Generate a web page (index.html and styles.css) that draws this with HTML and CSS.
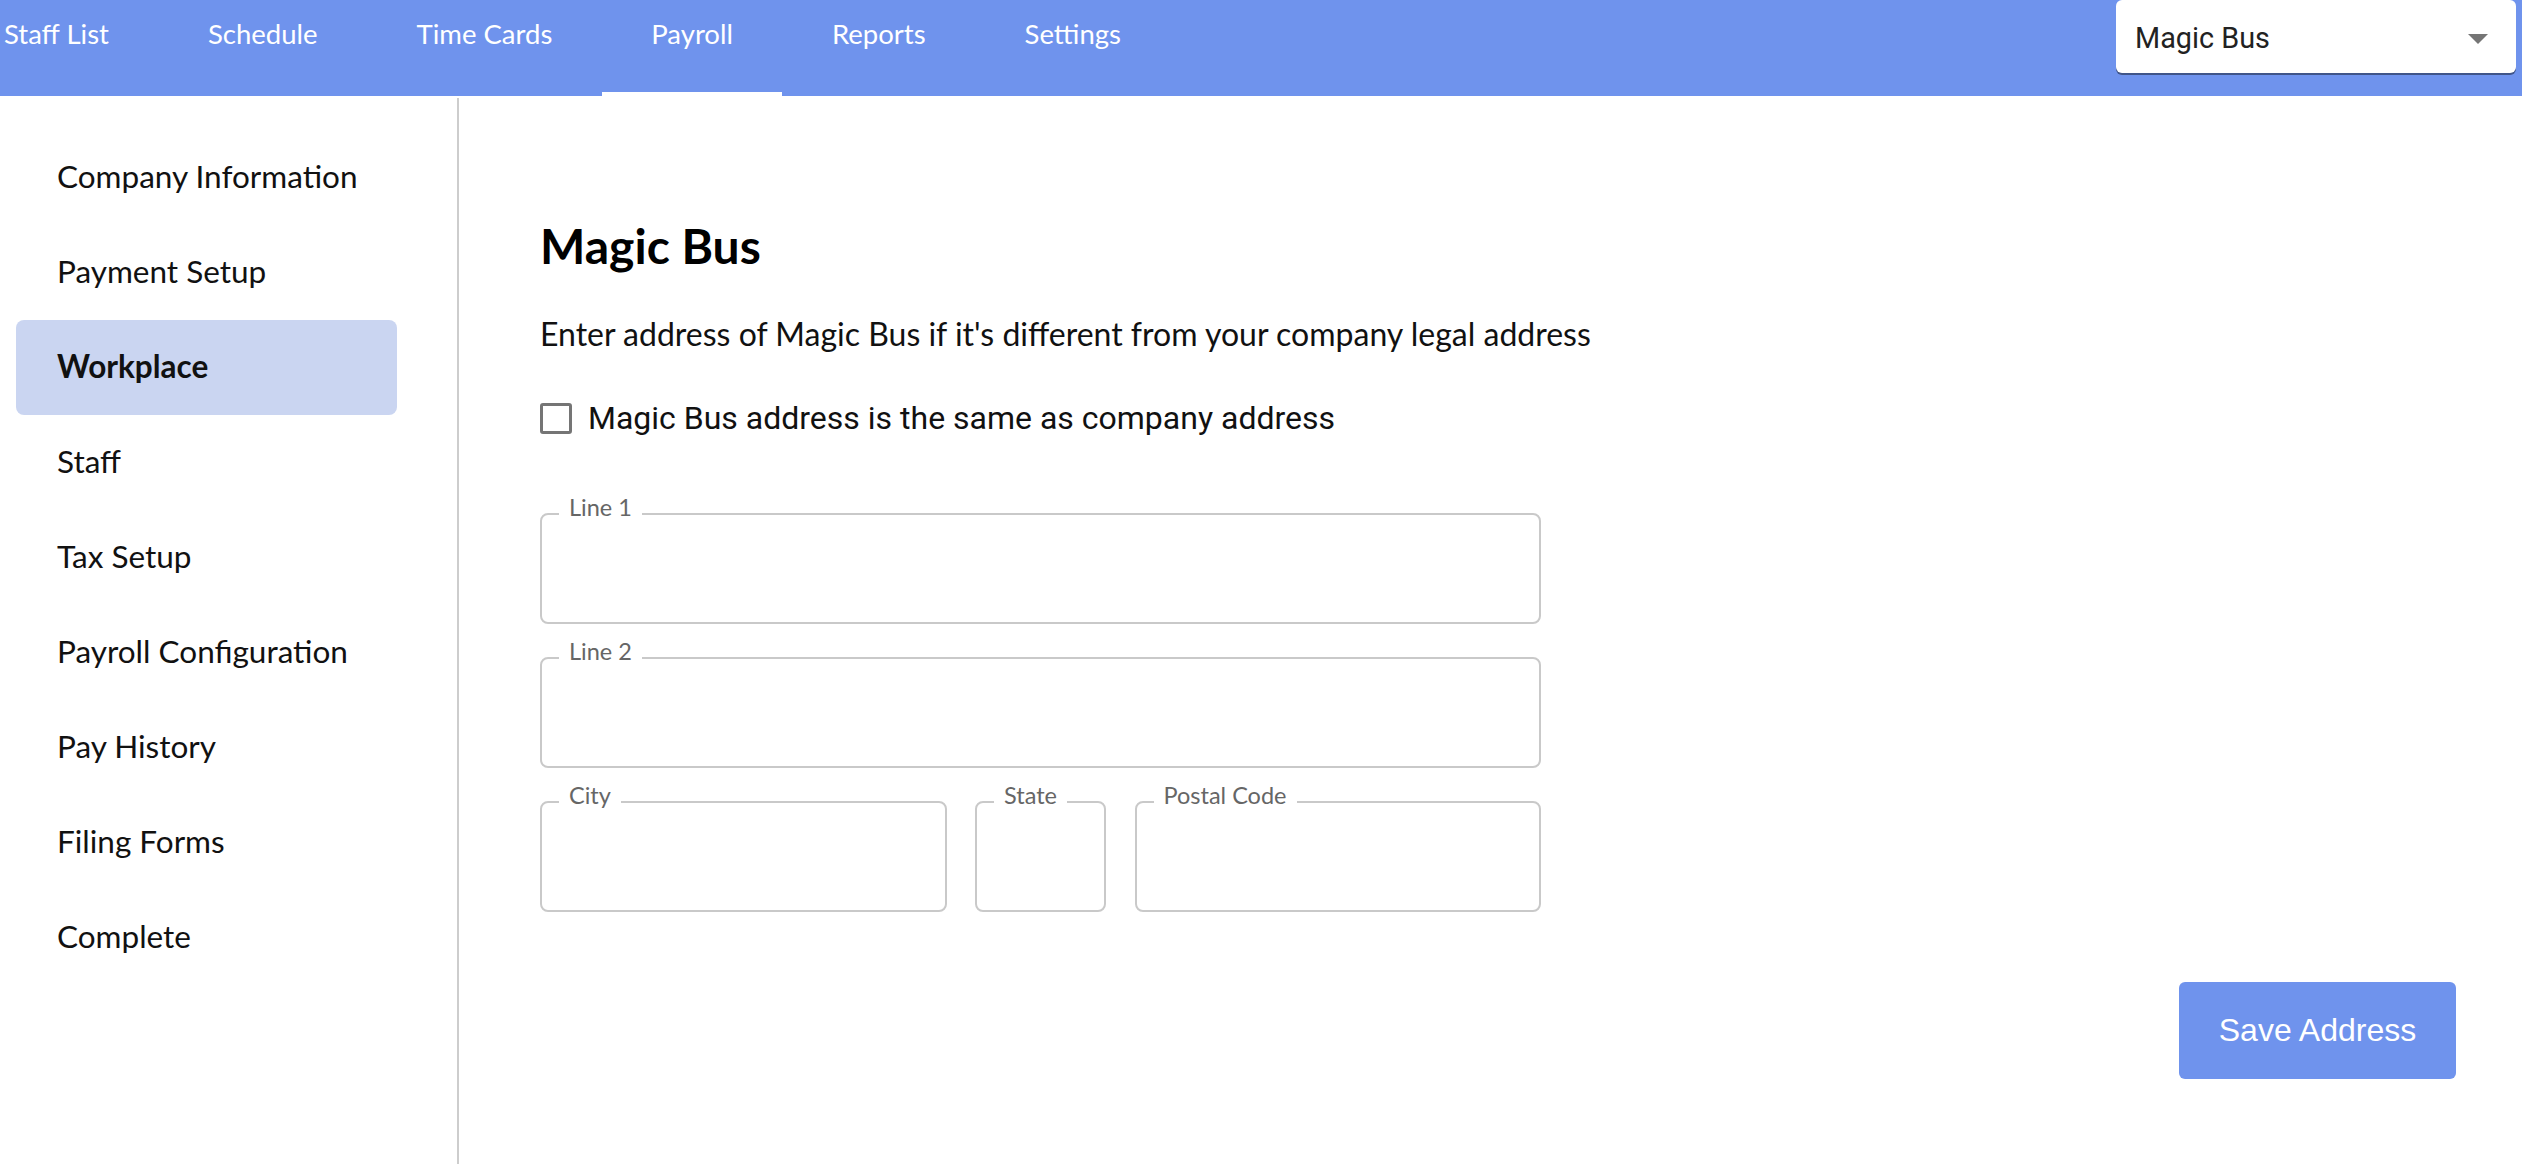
FILE: index.html
```html
<!DOCTYPE html>
<html lang="en">
<head>
<meta charset="utf-8">
<title>Workplace</title>
<link rel="stylesheet" href="styles.css">
</head>
<body>
<header class="topbar">
  <nav class="tabs">
    <a class="tab">Staff List</a>
    <a class="tab">Schedule</a>
    <a class="tab">Time Cards</a>
    <a class="tab active">Payroll</a>
    <a class="tab">Reports</a>
    <a class="tab">Settings</a>
  </nav>
  <div class="company-select">
    <span class="company-name">Magic Bus</span>
    <svg class="select-arrow" width="20" height="10" viewBox="0 0 20 10"><path d="M0 0h20L10 10z" fill="#757575"/></svg>
  </div>
</header>
<div class="layout">
  <aside class="sidebar">
    <ul class="side-list">
      <li class="side-item">Company Information</li>
      <li class="side-item">Payment Setup</li>
      <li class="side-item active">Workplace</li>
      <li class="side-item">Staff</li>
      <li class="side-item">Tax Setup</li>
      <li class="side-item">Payroll Configuration</li>
      <li class="side-item">Pay History</li>
      <li class="side-item">Filing Forms</li>
      <li class="side-item">Complete</li>
    </ul>
  </aside>
  <main class="content">
    <h1 class="title">Magic Bus</h1>
    <p class="desc">Enter address of Magic Bus if it's different from your company legal address</p>
    <label class="check-row">
      <input type="checkbox" class="check">
      <span class="check-label">Magic Bus address is the same as company address</span>
    </label>
    <div class="fields">
      <label class="field"><span class="field-label">Line 1</span><input class="field-input" type="text"></label>
      <label class="field"><span class="field-label">Line 2</span><input class="field-input" type="text"></label>
      <div class="field-row">
        <label class="field"><span class="field-label">City</span><input class="field-input" type="text"></label>
        <label class="field"><span class="field-label">State</span><input class="field-input" type="text"></label>
        <label class="field"><span class="field-label">Postal Code</span><input class="field-input" type="text"></label>
      </div>
    </div>
    <button class="save-btn" type="button">Save Address</button>
  </main>
</div>
</body>
</html>
```
FILE: styles.css
```css
* { box-sizing: border-box; }

html, body {
  margin: 0;
  padding: 0;
  background: #ffffff;
}

body {
  font-family: "Lato", "Noto Sans", sans-serif;
  color: #111111;
  width: 2522px;
  height: 1164px;
  overflow: hidden;
}

/* ---------- top bar ---------- */
.topbar {
  height: 96px;
  background: #6f93ed;
  display: flex;
  align-items: flex-start;
}

.tabs {
  display: flex;
  margin-left: -45.5px;
  height: 96px;
}

.tab {
  display: block;
  height: 96px;
  padding: 16.5px 49.5px 0;
  font-size: 27.5px;
  line-height: 1.2;
  color: #ffffff;
  white-space: nowrap;
}

.tab.active {
  box-shadow: inset 0 -4px 0 #ffffff;
}

.company-select {
  margin-left: auto;
  margin-right: 6px;
  width: 400px;
  height: 73px;
  background: #ffffff;
  border-radius: 6px;
  box-shadow: 0 2px 0 0 rgba(0, 0, 0, 0.42);
  display: flex;
  align-items: center;
  padding: 0 28px 0 19px;
  font-family: "Roboto", sans-serif;
  font-size: 28.8px;
  color: #222222;
}

.company-name {
  flex: 1;
  padding-top: 2px;
}

.select-arrow {
  display: block;
  margin-top: 4px;
}

/* ---------- layout ---------- */
.layout {
  display: flex;
  height: 1068px;
}

.sidebar {
  width: 459px;
  flex: none;
  margin-top: 2px;
  border-right: 2px solid #cdcdcd;
  padding-top: 32px;
}

.side-list {
  list-style: none;
  margin: 0;
  padding: 0;
}

.side-item {
  width: 381px;
  height: 95px;
  margin-left: 16px;
  padding: 0 0 3px 41px;
  display: flex;
  align-items: center;
  font-size: 31.5px;
  color: #111111;
  border-radius: 8px;
  white-space: nowrap;
}

.side-item.active {
  background: #cad5f1;
  font-weight: 700;
}

/* ---------- content ---------- */
.content {
  flex: 1;
  display: flex;
  flex-direction: column;
  padding: 121px 66px 0 81px;
}

.title {
  margin: 0;
  font-size: 48px;
  line-height: 1.2;
  font-weight: 700;
  color: #000000;
}

.desc {
  margin: 40.5px 0 0;
  font-size: 32px;
  line-height: 1.2;
  color: #111111;
}

.check-row {
  margin-top: 46px;
  display: flex;
  align-items: center;
  gap: 16px;
  height: 38px;
}

.check {
  appearance: none;
  -webkit-appearance: none;
  margin: 0;
  width: 32px;
  height: 31px;
  border: 3px solid #757575;
  border-radius: 3px;
  background: #ffffff;
}

.check-label {
  font-family: "Roboto", sans-serif;
  font-size: 32px;
  line-height: 1.2;
  color: #111111;
}

.fields {
  margin-top: 76px;
  width: 1001px;
  display: flex;
  flex-direction: column;
  gap: 33px;
}

.field {
  position: relative;
  display: block;
  height: 111px;
  border: 2px solid #c9c9c9;
  border-radius: 8px;
}

.field-label {
  position: absolute;
  top: -22px;
  left: 17px;
  padding: 0 10px;
  background: #ffffff;
  font-size: 23.5px;
  line-height: 1.2;
  color: #666666;
  white-space: nowrap;
}

.field-input {
  display: block;
  width: 100%;
  height: 100%;
  border: none;
  background: transparent;
  outline: none;
  padding: 0 28px;
  font-family: "Lato", sans-serif;
  font-size: 25.6px;
}

.field-row {
  display: grid;
  grid-template-columns: 1fr 131px 1fr;
  column-gap: 28.5px;
}

.save-btn {
  align-self: flex-end;
  margin-top: 69.5px;
  width: 277px;
  height: 97px;
  border: none;
  border-radius: 6px;
  background: #6f93ed;
  color: #ffffff;
  font-family: "Liberation Sans", Arial, sans-serif;
  font-size: 32px;
  padding: 0;
}
```
